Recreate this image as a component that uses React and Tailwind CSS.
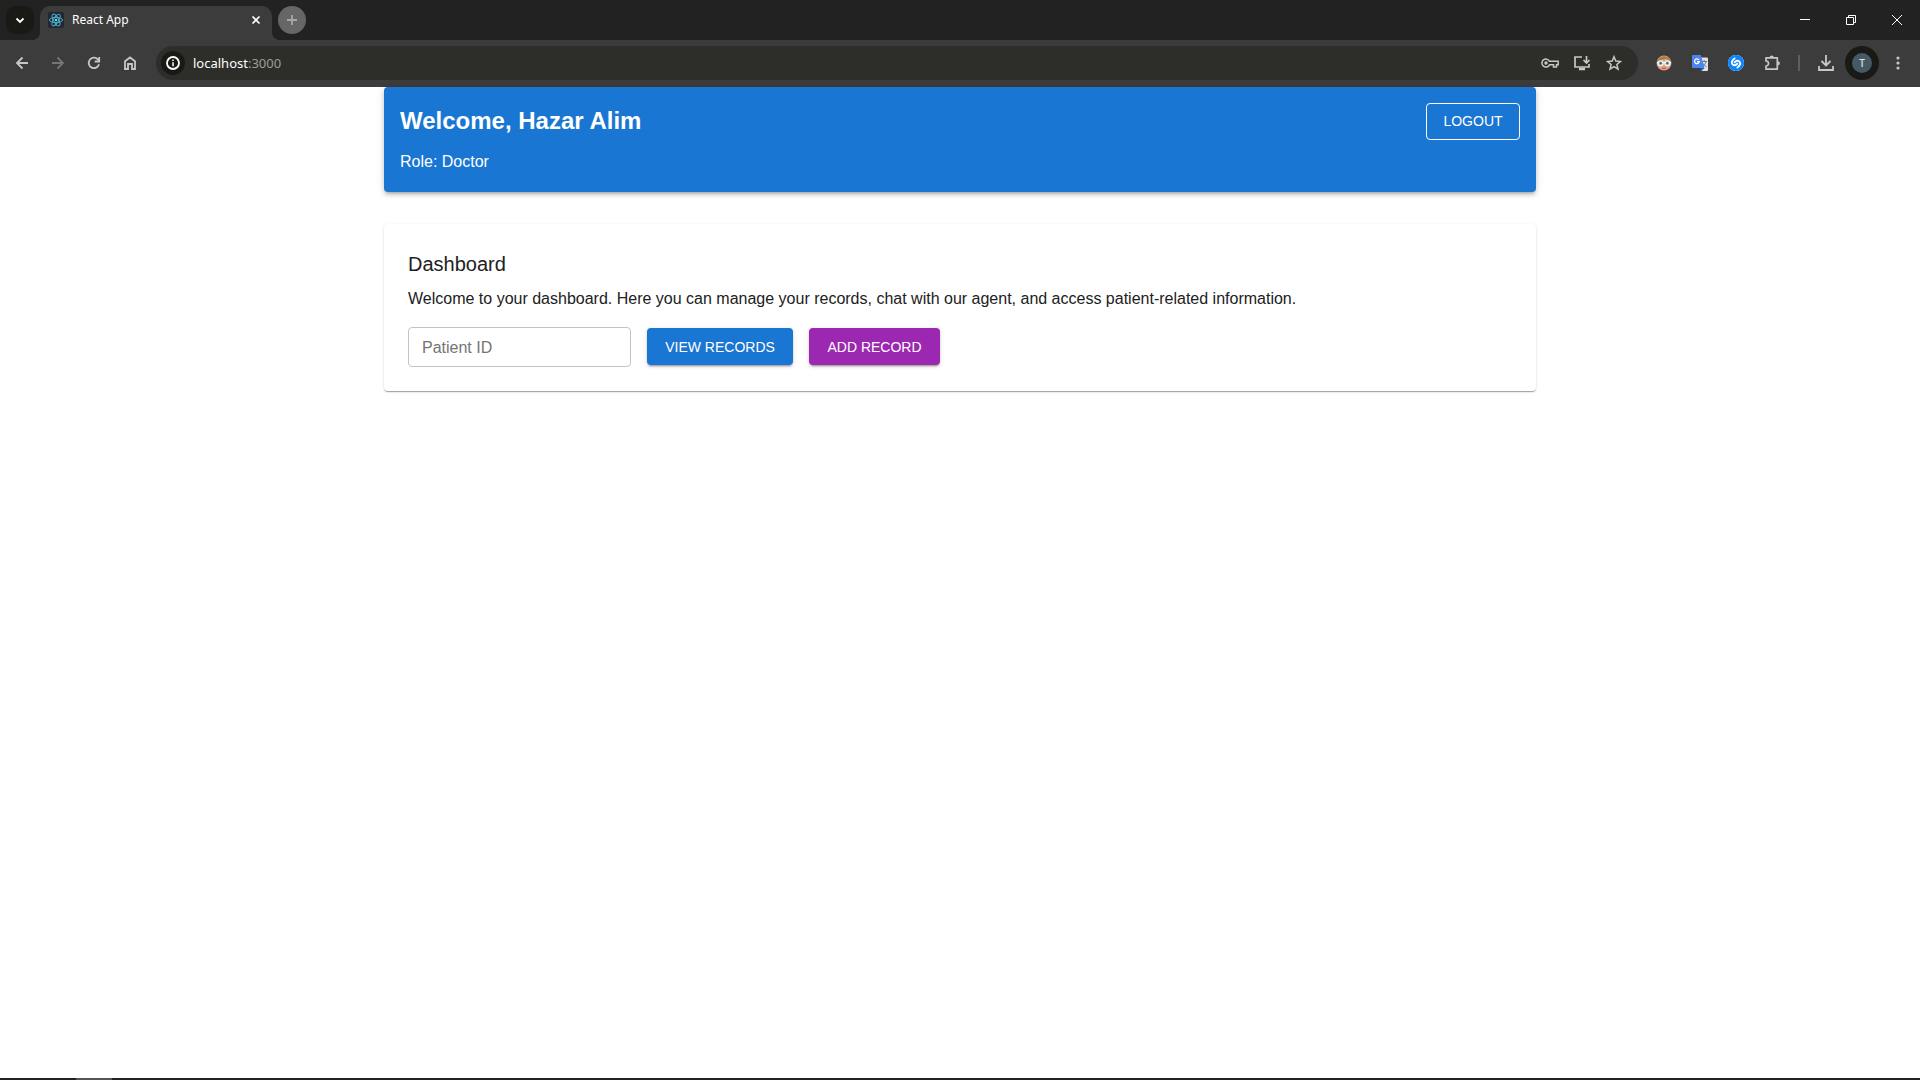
import React, { useState } from 'react';
import { SiShazam } from 'react-icons/si';

// Shared wrapper for the outlined toolbar icons
const Icon = ({ size = 20, stroke = 1.8, className = '', children }) => (
  <svg
    width={size}
    height={size}
    viewBox={`0 0 ${size} ${size}`}
    fill="none"
    stroke="currentColor"
    strokeWidth={stroke}
    className={className}
    aria-hidden="true"
  >
    {children}
  </svg>
);

const BackIcon = () => (
  <Icon>
    <path d="M16 10H5.500M10.500 4.500 5 10l5.500 5.500" />
  </Icon>
);

const ForwardIcon = () => (
  <Icon>
    <path d="M4 10h10.500M9.500 4.500 15 10 9.500 15.500" />
  </Icon>
);

const ReloadIcon = () => (
  <Icon>
    <path d="M15 11.200A5.200 5.200 0 1 1 13.800 6.400L15 7.600" />
    <path d="M15.200 4v4.500h-4.500" />
  </Icon>
);

const HomeIcon = () => (
  <Icon>
    <path d="M5 16V8.300L10 4.500l5 3.800V16h-3v-5H8v5z" />
  </Icon>
);

const InfoIcon = () => (
  <Icon size={16}>
    <circle cx="8" cy="8" r="6" />
    <path d="M8 7.200v4M8 4.500v1.500" strokeWidth="1.500" />
  </Icon>
);

const KeyIcon = () => (
  <Icon>
    <path d="M9.500 8.300H18.200V11.800H16.500V14H13.500V11.800H9.500A4 4 0 1 1 9.500 8.300z" strokeWidth="1.500" />
    <circle cx="6" cy="10" r="1.700" fill="currentColor" stroke="none" />
  </Icon>
);

const InstallIcon = () => (
  <Icon>
    <path d="M10 4H3v10h14v-3" strokeWidth="1.700" />
    <path d="M7 16h6" strokeWidth="2.500" />
    <path d="M14.500 3v6.500M11.500 7l3 3 3-3" strokeWidth="1.700" />
  </Icon>
);

const StarIcon = () => (
  <Icon stroke={1.5}>
    <path d="m10 3.800 1.800 4.300 4.600.4-3.500 3 1.100 4.600-4-2.500-4 2.500 1.100-4.600-3.500-3 4.600-.4z" />
  </Icon>
);

const PuzzleIcon = () => (
  <Icon stroke={1.7}>
    <path d="M4 4.800H15.300V16.200H4V13A2.500 2.500 0 0 0 4 8z" strokeLinejoin="round" />
    <path d="M7.600 4.500a2.100 2.100 0 0 1 4.200 0zM15.800 8.200a2.100 2.100 0 0 1 0 4.200z" fill="currentColor" stroke="none" />
  </Icon>
);

const DownloadIcon = () => (
  <Icon>
    <path d="M10 2v10M5.500 8 10 12.500 14.500 8M3 13v4h14v-4" />
  </Icon>
);

const ReactLogo = () => (
  <svg width="16" height="16" viewBox="0 0 16 16" aria-hidden="true" className="shrink-0">
    <rect width="16" height="16" rx="2" fill="#222831" />
    <g fill="none" stroke="#4fb8d3" strokeWidth="0.900">
      <ellipse cx="8" cy="8" rx="6.600" ry="2.600" />
      <ellipse cx="8" cy="8" rx="6.600" ry="2.600" transform="rotate(60 8 8)" />
      <ellipse cx="8" cy="8" rx="6.600" ry="2.600" transform="rotate(120 8 8)" />
    </g>
    <circle cx="8" cy="8" r="1.300" fill="#61dafb" />
  </svg>
);

const FaceLogo = () => (
  <svg width="16" height="16" viewBox="0 0 16 16" aria-hidden="true">
    <circle cx="8" cy="8" r="7.500" fill="#e2a07e" />
    <path d="M.6 7.500A7.500 7.500 0 0 1 15.400 7.500C13 6 12 4.200 10 3.800 6 4 4 6 .6 7.500z" fill="#a87b4d" />
    <path d="M1 7.500h14" stroke="#f2f5f5" strokeWidth="1.200" />
    <circle cx="4.600" cy="8.300" r="2.400" fill="#7fb0bd" stroke="#f2f5f5" strokeWidth="1.400" />
    <circle cx="11.400" cy="8.300" r="2.400" fill="#7fb0bd" stroke="#f2f5f5" strokeWidth="1.400" />
    <circle cx="4.800" cy="8.300" r="1" fill="#2f6270" />
    <circle cx="11.200" cy="8.300" r="1" fill="#2f6270" />
    <path d="M6 13q2 1 4 0" stroke="#b0543f" fill="none" />
  </svg>
);

const TranslateLogo = () => (
  <svg width="16" height="16" viewBox="0 0 16 16" aria-hidden="true">
    <path d="M6 2.500h9a1 1 0 0 1 1 1V15a1 1 0 0 1-1 1H9.500z" fill="#dfe1e4" />
    <path d="M9.500 6.500H15M12.200 5v1.500M14 6.500c-.6 2.400-2 4-3.500 5M11 8.500c.8 1.500 2 2.500 3.500 3.200" stroke="#607d8b" fill="none" />
    <path d="M1 0h7.800L12.500 13H1a1 1 0 0 1-1-1V1a1 1 0 0 1 1-1z" fill="#4a86f0" />
    <path d="m8 13 4.500 0L9.500 16z" fill="#2757c4" />
    <path d="M7 5A2.400 2.400 0 1 0 7.300 6.700H5" stroke="#fff" strokeWidth="1.200" fill="none" />
  </svg>
);

const ShazamLogo = () => (
  <span className="flex rounded-full bg-white text-[#0a84ff]">
    <SiShazam size={16} aria-hidden="true" />
  </span>
);

const ToolButton = ({ label, className = 'w-9 text-[#c7c7c7]', children }) => (
  <button type="button" aria-label={label} className={`flex h-8 shrink-0 items-center justify-center ${className}`}>
    {children}
  </button>
);

const EXTENSIONS = [
  { label: 'Profile extension', Logo: FaceLogo },
  { label: 'Google Translate', Logo: TranslateLogo },
  { label: 'Shazam', Logo: ShazamLogo },
];

// Tab strip with the window controls
const TabStrip = () => (
  <div className="flex h-10 bg-[#222222]">
    <button type="button" aria-label="Search tabs" className="mt-[6px] ml-[6px] flex h-7 w-7 items-center justify-center rounded-[10px] bg-[#191a15] text-white">
      <Icon size={10}>
        <path d="m1.500 3.500 3.500 3.500 3.500-3.500" />
      </Icon>
    </button>
    <div className="relative mt-[6px] ml-[6px] flex w-[232px] items-center rounded-t-[10px] bg-[#3c3c3c] pr-1 pb-[6px] pl-2">
      <span className="absolute bottom-0 -left-2 h-2 w-2 bg-[radial-gradient(circle_at_0_0,#222222_8px,#3c3c3c_8px)]" />
      <span className="absolute -right-2 bottom-0 h-2 w-2 bg-[radial-gradient(circle_at_100%_0,#222222_8px,#3c3c3c_8px)]" />
      <ReactLogo />
      <span className="ml-2 flex-1 text-[12px] leading-4 text-white">React App</span>
      <button type="button" aria-label="Close tab" className="flex h-6 w-6 items-center justify-center text-white">
        <Icon size={10} stroke={1.7}>
          <path d="m1.500 1.500 7 7m0-7-7 7" />
        </Icon>
      </button>
    </div>
    <button type="button" aria-label="New tab" className="mt-[6px] ml-[6px] flex h-7 w-7 items-center justify-center rounded-full bg-[#666666] text-[#a8a8a8]">
      <Icon size={10}>
        <path d="M5 0v10M0 5h10" />
      </Icon>
    </button>
    <div className="ml-auto flex text-white">
      <button type="button" aria-label="Minimize" className="flex w-[46px] items-center justify-center">
        <Icon size={10} stroke={1}>
          <path d="M0 4.500h10" />
        </Icon>
      </button>
      <button type="button" aria-label="Restore" className="flex w-[46px] items-center justify-center">
        <Icon size={10} stroke={1}>
          <path d="M.5 2.500h7v7h-7zM2.500 2.500v-2h7v7h-2" />
        </Icon>
      </button>
      <button type="button" aria-label="Close" className="flex w-[46px] items-center justify-center">
        <Icon size={10} stroke={1}>
          <path d="m0 0 10 10M10 0 0 10" />
        </Icon>
      </button>
    </div>
  </div>
);

// Navigation buttons, address bar and extensions
const AddressBar = () => (
  <div className="flex items-center bg-[#3c3c3c] px-1 pt-[6px] pb-[7px]">
    <ToolButton label="Back"><BackIcon /></ToolButton>
    <ToolButton label="Forward" className="w-9 text-[#757575]"><ForwardIcon /></ToolButton>
    <ToolButton label="Reload"><ReloadIcon /></ToolButton>
    <ToolButton label="Home"><HomeIcon /></ToolButton>
    <div className="mx-2 flex h-[34px] flex-1 items-center rounded-full bg-[#2d2e29] pr-2 pl-[5px]">
      <button type="button" aria-label="View site information" className="flex h-6 w-6 items-center justify-center rounded-full bg-[#191a15] text-white">
        <InfoIcon />
      </button>
      <div className="ml-2 flex-1 text-[13px] leading-5 text-[#9c9c9a]">
        <span className="text-white">localhost</span>:3000
      </div>
      <ToolButton label="Manage passwords" className="w-8 text-[#c7c7c7]"><KeyIcon /></ToolButton>
      <ToolButton label="Install app" className="w-8 text-[#c7c7c7]"><InstallIcon /></ToolButton>
      <ToolButton label="Bookmark" className="w-8 text-[#c7c7c7]"><StarIcon /></ToolButton>
    </div>
    {EXTENSIONS.map(({ label, Logo }) => (
      <ToolButton key={label} label={label}><Logo /></ToolButton>
    ))}
    <ToolButton label="Extensions"><PuzzleIcon /></ToolButton>
    <span className="mx-2 h-4 w-[2px] bg-[#5f5f5f]" />
    <ToolButton label="Downloads"><DownloadIcon /></ToolButton>
    <button type="button" aria-label="Profile" className="mx-px flex h-[34px] w-[34px] items-center justify-center rounded-full bg-[#191a15]">
      <span className="flex h-5 w-5 items-center justify-center rounded-full bg-[#455a64] text-[10px] leading-none font-medium text-[#e0e4e6]">T</span>
    </button>
    <ToolButton label="Menu">
      <svg width="4" height="14" viewBox="0 0 4 14" fill="currentColor" aria-hidden="true">
        <circle cx="2" cy="2" r="1.600" />
        <circle cx="2" cy="7" r="1.600" />
        <circle cx="2" cy="12" r="1.600" />
      </svg>
    </ToolButton>
  </div>
);

const HEADER_SHADOW = 'shadow-[0_3px_3px_-2px_rgba(0,0,0,0.2),0_3px_4px_0_rgba(0,0,0,0.14),0_1px_8px_0_rgba(0,0,0,0.12)]';
const PAPER_SHADOW = 'shadow-[0_2px_1px_-1px_rgba(0,0,0,0.2),0_1px_1px_0_rgba(0,0,0,0.14),0_1px_3px_0_rgba(0,0,0,0.12)]';
const BUTTON_SHADOW = 'shadow-[0_3px_1px_-2px_rgba(0,0,0,0.2),0_2px_2px_0_rgba(0,0,0,0.14),0_1px_5px_0_rgba(0,0,0,0.12)]';

const Dashboard = () => {
  const [patientId, setPatientId] = useState('');

  return (
    <main className="mx-auto w-full max-w-[1200px] flex-1 px-6 font-['Liberation_Sans',Arial,sans-serif] text-[#212121]">
      <header className={`flex items-start justify-between rounded bg-[#1976d2] px-4 pt-4 pb-[18px] text-white ${HEADER_SHADOW}`}>
        <div>
          <h1 className="text-2xl leading-9 font-bold">Welcome, Hazar Alim</h1>
          <p className="mt-[11px] text-base">Role: Doctor</p>
        </div>
        <button type="button" className="h-[37px] w-[94px] rounded border border-white pb-[2px] text-sm font-medium">
          LOGOUT
        </button>
      </header>

      <section className={`mt-8 rounded bg-white p-6 ${PAPER_SHADOW}`}>
        <h2 className="text-xl leading-8">Dashboard</h2>
        <p className="mt-[7px] text-base">
          Welcome to your dashboard. Here you can manage your records, chat with our agent, and access patient-related information.
        </p>
        <div className="mt-4 flex gap-4">
          <input
            type="text"
            aria-label="Patient ID"
            placeholder="Patient ID"
            value={patientId}
            onChange={(e) => setPatientId(e.target.value)}
            className="h-10 w-[223px] rounded border border-[#c4c4c4] px-[13px] pt-px text-base placeholder:text-[#757575]"
          />
          <button type="button" className={`mt-px h-[37px] w-[146px] rounded bg-[#1976d2] text-sm font-medium text-white ${BUTTON_SHADOW}`}>
            VIEW RECORDS
          </button>
          <button type="button" className={`mt-px h-[37px] w-[131px] rounded bg-[#9c27b0] text-sm font-medium text-white ${BUTTON_SHADOW}`}>
            ADD RECORD
          </button>
        </div>
      </section>
    </main>
  );
};

const App = () => (
  <div className="flex min-h-screen flex-col bg-white font-['Noto_Sans','Open_Sans',sans-serif]">
    <TabStrip />
    <AddressBar />
    <Dashboard />
    {/* Top edge of the hidden taskbar */}
    <div className="flex h-[2px] bg-[#222222] pl-[76px]">
      <span className="w-9 bg-[#555555]" />
    </div>
  </div>
);

export default App;
